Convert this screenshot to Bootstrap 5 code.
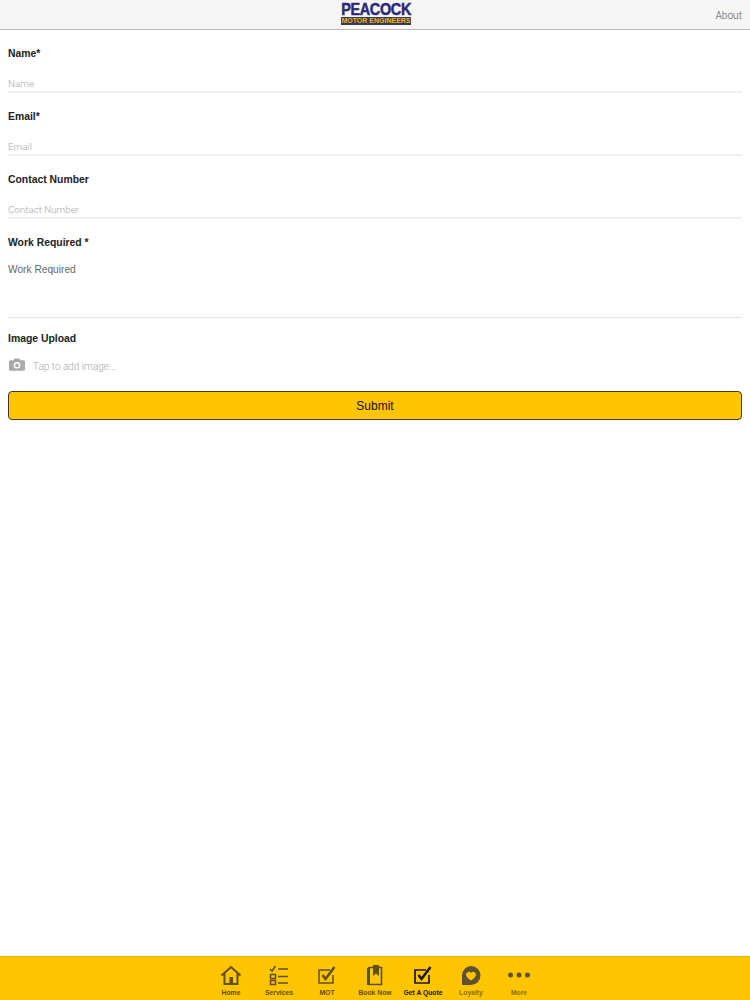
<!DOCTYPE html>
<html lang="en"><head><meta charset="utf-8">
<link href="https://cdn.jsdelivr.net/npm/bootstrap@5.3.0/dist/css/bootstrap.min.css" rel="stylesheet">
<style>
html,body{height:100%}
body{font-family:"Liberation Sans",Arial,sans-serif;color:#222;background:#fff;overflow:hidden}
.shell{height:1000px}
.topbar{height:30px;background:#f6f6f7;border-bottom:1px solid #b9b9bd;position:relative}
.logo-box{width:70px;height:22px;margin-top:3px;margin-left:2px;line-height:1}
.logo-top{display:flex;justify-content:center;height:14px;line-height:14px;white-space:nowrap}
.logo-word{font-weight:700;font-size:17px;color:#2b2a77;letter-spacing:-.4px;transform:scaleX(.85);-webkit-text-stroke:.5px #2b2a77}
.logo-sub{background:#3a3658;color:#e8bb10;font-size:7px;font-weight:700;height:8px;line-height:8px;text-align:center;white-space:nowrap}
.about{position:absolute;right:8px;top:9px;font-family:Roboto,"Liberation Sans",sans-serif;font-size:10.2px;line-height:13px;color:#555;font-weight:300}
.form-zone{padding:0 8px}
.fld-label{font-size:10.4px;font-weight:700;line-height:13px;color:#222;margin:0}
.fld-input{display:block;width:100%;border:0;border-bottom:2px solid #f0f0f2;padding:2px 0 0;margin:0;height:19px;font-family:Roboto,"Liberation Sans",sans-serif;font-weight:300;font-size:9.8px;line-height:14px;color:#333;background:transparent;outline:0;border-radius:0}
.fld-input::placeholder{color:#a8a8a8;opacity:1}
.fld-area{display:block;width:100%;border:0;border-bottom:1px solid #e2e2e4;padding:1px 0 0;height:56px;font-size:10.2px;line-height:14px;background:transparent;resize:none;outline:0;border-radius:0}
.fld-area::placeholder{color:#666;opacity:1}
.f1{padding-top:17px}
.gap-lab{margin-top:14px}
.f-next{padding-top:17px}
.f-upload{padding-top:14px}
.gap-area{margin-top:13px}
.upload{height:16px;margin-top:13px;color:#a8a8a8;font-family:Roboto,"Liberation Sans",sans-serif;font-weight:300;font-size:10px}
.cam{margin-left:1px;margin-right:8px;margin-bottom:3px}
.submit-btn{display:block;width:100%;height:29px;margin-top:17px;background:#ffc500;border:1px solid #3f3a20;border-radius:4px;font-size:12px;color:#111;padding:2px 0 0;line-height:25px}
.submit-btn:hover{background:#ffc500;color:#111;border-color:#3f3a20}
.tabbar{height:44px;background:#ffc500;border-top:1px solid #e5b400;position:absolute;left:0;right:0;bottom:0}
.tab-item{width:48px;color:#5f4f14;font-size:6.8px;font-weight:700;line-height:8px;text-align:center;text-decoration:none}
.tab-item.active{color:#1c1600}
.tab-item.faded{color:#86700f}
.tab-ico{display:block;height:24px;margin:6px auto 0}
.tab-lbl{display:block;margin-top:2px;white-space:nowrap}
</style></head><body>
<div class="shell position-relative">
 <div class="topbar d-flex justify-content-center">
  <div class="logo-box">
   <div class="logo-top"><span class="logo-word">PEACOCK</span></div>
   <div class="logo-sub">MOTOR ENGINEERS</div>
  </div>
  <a class="about text-decoration-none">About</a>
 </div>
 <form class="form-zone">
  <div class="f1"><p class="fld-label">Name*</p><input class="fld-input gap-lab" placeholder="Name"></div>
  <div class="f-next"><p class="fld-label">Email*</p><input class="fld-input gap-lab" placeholder="Email"></div>
  <div class="f-next"><p class="fld-label">Contact Number</p><input class="fld-input gap-lab" placeholder="Contact Number"></div>
  <div class="f-next"><p class="fld-label">Work Required *</p><textarea class="fld-area gap-area" placeholder="Work Required"></textarea></div>
  <div class="f-upload"><p class="fld-label">Image Upload</p>
   <div class="upload d-flex align-items-center">
    <svg width="16" height="13" viewBox="0 0 16 13" class="cam"><path fill="#a9a9a9" fill-rule="evenodd" d="M1.500 2.200H4.600L5.600.4h4.800l1 1.800h3.100c.8 0 1.500.7 1.500 1.500v7.500c0 .8-.7 1.500-1.500 1.500h-13C.7 12.700 0 12 0 11.200V3.700c0-.8.7-1.500 1.500-1.500zM8 4a3.300 3.300 0 1 0 0 6.600A3.300 3.300 0 0 0 8 4zm0 1.400a1.900 1.900 0 1 1 0 3.800 1.900 1.900 0 0 1 0-3.800z"/></svg>
    <span>Tap to add image...</span>
   </div>
  </div>
  <button type="button" class="btn submit-btn">Submit</button>
 </form>
 <nav class="tabbar d-flex justify-content-center">
  <a class="tab-item"><svg class="tab-ico" width="22" height="24" viewBox="0 0 22 24"><path fill="none" stroke="#5f4f14" stroke-width="2" d="M1.500 12.500 11 4l9.500 8.500M4.500 10.500V21h13V10.500"/><path fill="#5f4f14" d="M9.500 14h3.500v7H9.500z"/></svg><span class="tab-lbl">Home</span></a>
  <a class="tab-item"><svg class="tab-ico" width="20" height="24" viewBox="0 0 20 24"><path fill="none" stroke="#5f4f14" stroke-width="1.500" d="M1 6l2 2 3.500-5M9 6h10M1.500 11.500h5v4h-5zM9 13.500h10M1.500 17.500h5v4h-5zM9 20h10"/></svg><span class="tab-lbl">Services</span></a>
  <a class="tab-item"><svg class="tab-ico" width="20" height="24" viewBox="0 0 20 24"><path fill="none" stroke="#5f4f14" stroke-width="1.500" d="M16 12v8H2V7h11"/><path fill="none" stroke="#5f4f14" stroke-width="2.500" d="M5.500 12l3 4 9-12"/></svg><span class="tab-lbl">MOT</span></a>
  <a class="tab-item"><svg class="tab-ico" width="18" height="24" viewBox="0 0 18 24"><path fill="none" stroke="#5f4f14" stroke-width="1.600" d="M3 4.500h12.500v17H3z"/><path fill="#5f4f14" d="M1 5h3v17H1zM7 2h6v11l-3-2.500L7 13z"/></svg><span class="tab-lbl">Book Now</span></a>
  <a class="tab-item active"><svg class="tab-ico" width="20" height="24" viewBox="0 0 20 24"><path fill="none" stroke="#1c1600" stroke-width="1.700" d="M16 12v8H2V7h11"/><path fill="none" stroke="#1c1600" stroke-width="2.500" d="M5.500 12l3 4 9-12"/></svg><span class="tab-lbl">Get A Quote</span></a>
  <a class="tab-item faded"><svg class="tab-ico" width="20" height="24" viewBox="0 0 20 24"><path fill="#5f5230" d="M10 3a9.500 9.500 0 0 1 0 19H1v-9.500A9.500 9.500 0 0 1 10 3z"/><path fill="#ffc500" d="M10 17.500c-3-2-5-3.800-5-6a2.700 2.700 0 0 1 5-1.400 2.700 2.700 0 0 1 5 1.400c0 2.200-2 4-5 6z"/></svg><span class="tab-lbl">Loyalty</span></a>
  <a class="tab-item faded"><svg class="tab-ico" width="24" height="24" viewBox="0 0 24 24"><g fill="#5f5230"><circle cx="3.500" cy="12" r="2.500"/><circle cx="12" cy="12" r="2.500"/><circle cx="20.500" cy="12" r="2.500"/></g></svg><span class="tab-lbl">More</span></a>
 </nav>
</div>
<script src="https://cdn.jsdelivr.net/npm/bootstrap@5.3.0/dist/js/bootstrap.bundle.min.js"></script>
</body></html>
